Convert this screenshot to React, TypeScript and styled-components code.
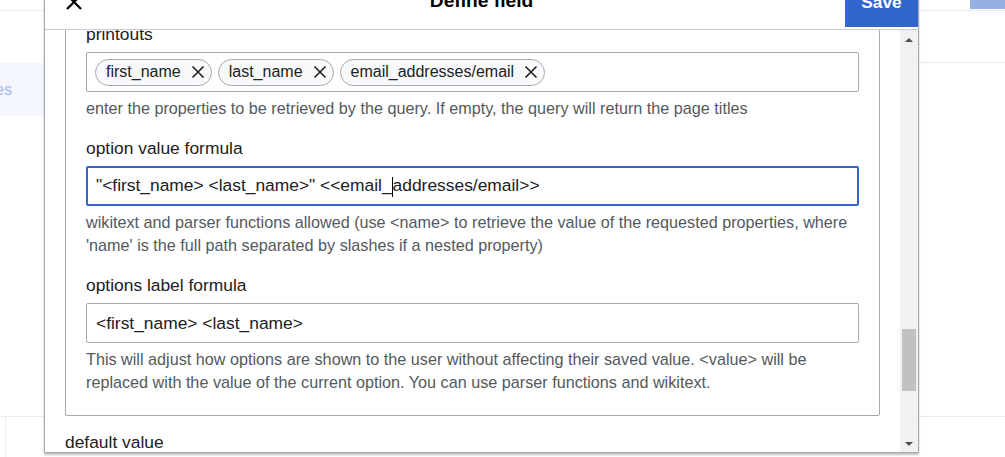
import * as React from "react";
import styled, { createGlobalStyle } from "styled-components";

const GlobalStyle = createGlobalStyle`
  html, body {
    margin: 0;
    padding: 0;
    background: #ffffff;
    font-family: "Liberation Sans", Arial, sans-serif;
    color: #202122;
  }
  #root {
    width: 1005px;
    height: 457px;
    position: relative;
    overflow: hidden;
  }
`;

const Page = styled.div`
  display: flex;
  flex-direction: column;
  height: 457px;
`;

const TopBar = styled.div`
  height: 10px;
  border-bottom: 1px solid #eaecf0;
  display: flex;
  justify-content: flex-end;
`;

const DimButton = styled.div`
  width: 35px;
  height: 9px;
  background: #97b0e4;
`;

const Middle = styled.div`
  display: flex;
  height: 405px;
  border-bottom: 1px solid #eaecf0;
`;

const Sidebar = styled.div`
  width: 44px;
  padding-top: 52px;
`;

const NavItem = styled.div`
  height: 53px;
  background: #f3f6fd;
  display: flex;
  align-items: center;
  justify-content: flex-end;
  padding-right: 32px;
  overflow: hidden;
  white-space: nowrap;
  font-size: 16px;
  color: #a3b6ec;
`;

const MainArea = styled.div`
  flex: 1;
  display: flex;
  flex-direction: column;
`;

const Tabs = styled.div`
  height: 51px;
  border-bottom: 1px solid #eaecf0;
`;

const Footer = styled.div`
  flex: 1;
  display: flex;
`;

const FooterCell = styled.div`
  width: 5px;
  border-right: 1px solid #eaecf0;
`;

/* dialog lies over the page */
const Dialog = styled.div`
  position: absolute;
  left: 44px;
  top: -24px;
  width: 873px;
  height: 475px;
  background: #ffffff;
  border: 1px solid #a2a9b1;
  box-shadow: 0 2px 2px 0 rgba(0, 0, 0, 0.25);
  display: flex;
  flex-direction: column;
`;

const Header = styled.div`
  height: 52px;
  border-bottom: 1px solid #c8ccd1;
  display: grid;
  grid-template-columns: 58px 1fr 73px;
  align-items: start;
  flex-shrink: 0;
`;

const CloseButton = styled.button`
  border: none;
  background: transparent;
  height: 50px;
  display: flex;
  align-items: center;
  justify-content: center;
  padding: 0;
`;

const Title = styled.div`
  height: 50px;
  line-height: 48px;
  text-align: center;
  font-weight: bold;
  font-size: 19.2px;
  color: #000;
  padding-left: 15px;
`;

const SaveButton = styled.button`
  height: 50px;
  border: none;
  background: #3366cc;
  color: #ffffff;
  font-family: inherit;
  font-weight: bold;
  font-size: 17.3px;
  padding: 0;
`;

const Body = styled.div`
  flex: 1;
  display: flex;
  min-height: 0;
`;

const ScrollArea = styled.div`
  flex: 1;
  overflow: hidden;
  padding: 0 20px;
`;

const Content = styled.div`
  margin-top: -142px;
`;

const Fieldset = styled.div`
  border: 1px solid #a2a9b1;
  border-radius: 2px;
  padding: 20px 20px 21px;
`;

const Field = styled.div`
  & + & {
    margin-top: 17px;
  }
`;

const Label = styled.div`
  font-size: 17.4px;
  line-height: 23px;
  color: #202122;
  margin-bottom: 6px;
`;

const InputBox = styled.div<{ $focused?: boolean }>`
  height: 40px;
  box-sizing: border-box;
  border: ${({ $focused }) => ($focused ? "2px solid #3366cc" : "1px solid #a2a9b1")};
  border-radius: 2px;
  padding: 0 ${({ $focused }) => ($focused ? "8px" : "9px")};
  display: flex;
  align-items: center;
  font-size: 17.4px;
  color: #202122;
  white-space: pre;
`;

const TagBox = styled.div`
  height: 40px;
  box-sizing: border-box;
  border: 1px solid #a2a9b1;
  border-radius: 2px;
  padding: 0 8px;
  display: flex;
  align-items: center;
  gap: 6px;
`;

const Tag = styled.div`
  height: 27px;
  box-sizing: border-box;
  border: 1px solid #a2a9b1;
  border-radius: 14px;
  background: #f8f9fa;
  display: flex;
  align-items: center;
  gap: 10px;
  padding: 0 6px 0 10px;
  font-size: 16px;
  color: #202122;
`;

const Caret = styled.span`
  display: inline-block;
  width: 1px;
  height: 20px;
  background: #000;
  vertical-align: middle;
`;

const Help = styled.div`
  margin-top: 5px;
  font-size: 16.2px;
  line-height: 23px;
  color: #54595d;
`;

const Outside = styled(Label)`
  margin-top: 15px;
`;

const Scrollbar = styled.div`
  width: 18px;
  background: #f1f1f1;
  display: flex;
  flex-direction: column;
  align-items: center;
  padding: 0 0 6px;
`;

const Arrow = styled.div<{ $down?: boolean }>`
  width: 0;
  height: 0;
  border-left: 4px solid transparent;
  border-right: 4px solid transparent;
  ${({ $down }) => ($down ? "border-top: 4px solid #505050;" : "border-bottom: 4px solid #505050;")}
  margin-top: ${({ $down }) => ($down ? "auto" : "8px")};
`;

const Thumb = styled.div`
  width: 14px;
  height: 62px;
  background: #c1c1c1;
  margin-top: 287px;
`;

const CloseIcon = () => (
  <svg width="20" height="20" viewBox="0 0 20 20">
    <path d="M3 3 L17 17 M17 3 L3 17" stroke="#000" strokeWidth="2.2" />
  </svg>
);

const TagX = () => (
  <svg width="14" height="14" viewBox="0 0 14 14">
    <path d="M1.5 1.5 L12.5 12.5 M12.5 1.5 L1.5 12.5" stroke="#202122" strokeWidth="1.6" />
  </svg>
);

const printouts = ["first_name", "last_name", "email_addresses/email"];

export default function App() {
  return (
    <>
      <GlobalStyle />
      <Page>
        <TopBar>
          <DimButton />
        </TopBar>
        <Middle>
          <Sidebar>
            <NavItem>Properties</NavItem>
          </Sidebar>
          <MainArea>
            <Tabs />
          </MainArea>
        </Middle>
        <Footer>
          <FooterCell />
        </Footer>
      </Page>

      <Dialog>
        <Header>
          <CloseButton aria-label="close">
            <CloseIcon />
          </CloseButton>
          <Title>Define field</Title>
          <SaveButton>Save</SaveButton>
        </Header>
        <Body>
          <ScrollArea>
            <Content>
              <Fieldset>
                <Field>
                  <Label>query</Label>
                  <InputBox>[[Category:Contacts]]</InputBox>
                  <Help>enter a query in the SMW syntax</Help>
                </Field>
                <Field>
                  <Label>printouts</Label>
                  <TagBox>
                    {printouts.map((p) => (
                      <Tag key={p}>
                        {p}
                        <TagX />
                      </Tag>
                    ))}
                  </TagBox>
                  <Help>enter the properties to be retrieved by the query. If empty, the query will return the page titles</Help>
                </Field>
                <Field>
                  <Label>option value formula</Label>
                  <InputBox $focused>
                    <span>
                      {'"<first_name> <last_name>" <<email_'}
                      <Caret />
                      {"addresses/email>>"}
                    </span>
                  </InputBox>
                  <Help>
                    wikitext and parser functions allowed (use &lt;name&gt; to retrieve the value of the requested properties, where
                    'name' is the full path separated by slashes if a nested property)
                  </Help>
                </Field>
                <Field>
                  <Label>options label formula</Label>
                  <InputBox>{"<first_name> <last_name>"}</InputBox>
                  <Help>
                    This will adjust how options are shown to the user without affecting their saved value. &lt;value&gt; will be
                    replaced with the value of the current option. You can use parser functions and wikitext.
                  </Help>
                </Field>
              </Fieldset>
              <Outside>default value</Outside>
            </Content>
          </ScrollArea>
          <Scrollbar>
            <Arrow />
            <Thumb />
            <Arrow $down />
          </Scrollbar>
        </Body>
      </Dialog>
    </>
  );
}
